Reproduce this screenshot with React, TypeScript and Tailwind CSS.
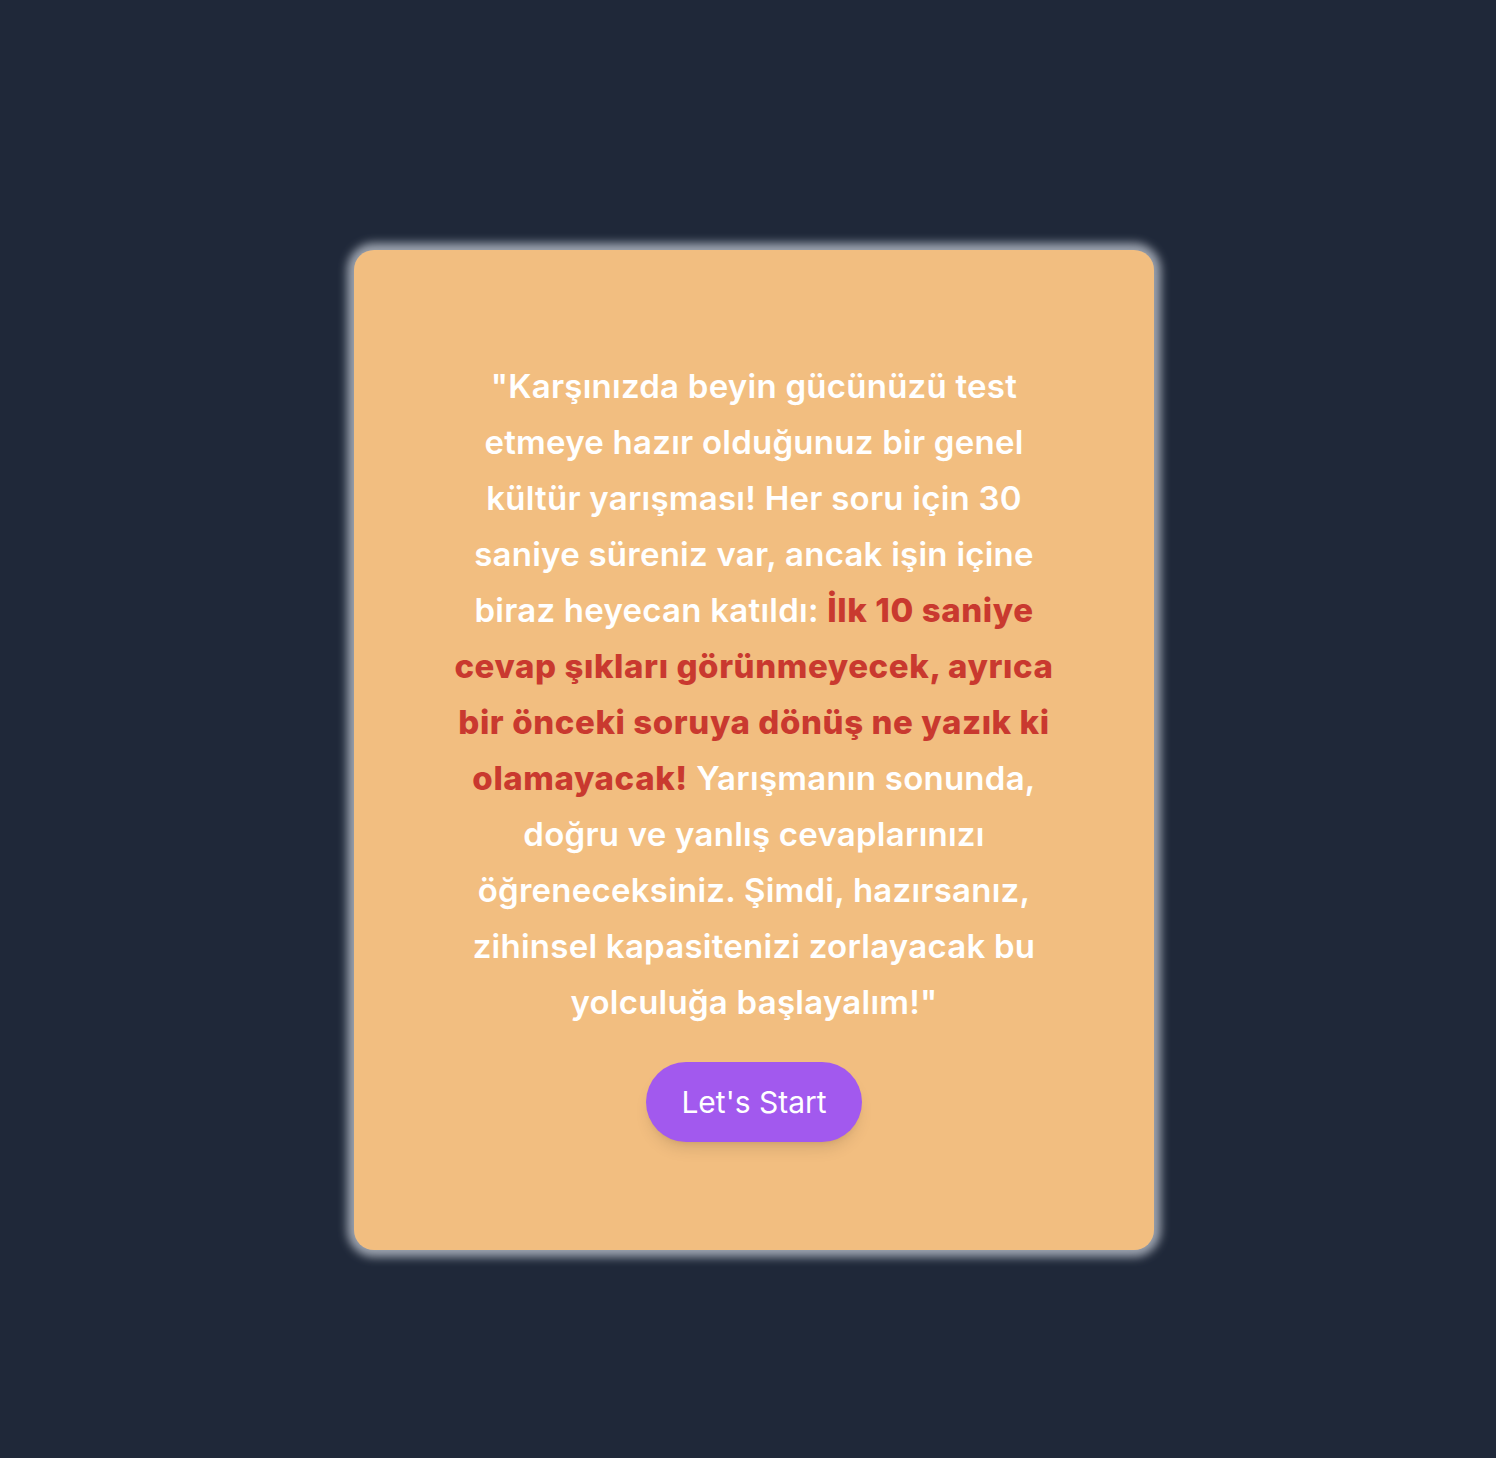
import React from "react";

export default function App() {
  return (
    <div className="min-h-screen w-full bg-[#1f2839] flex items-center justify-center pt-[42px] pl-[12px] font-['Inter',sans-serif]">
      <div className="w-[800px] h-[1000px] rounded-[20px] bg-[#f2be80] shadow-[0_0_10px_7px_#9ca3af] flex flex-col items-center justify-center px-[90px]">
        <p className="text-white text-[33px] font-semibold leading-[56px] tracking-[0.25px] text-center">
          "Karşınızda beyin gücünüzü test etmeye hazır olduğunuz bir genel kültür
          yarışması! Her soru için 30 saniye süreniz var, ancak işin içine biraz
          heyecan katıldı:{" "}
          <span className="text-[#c9392f] font-extrabold tracking-[0.6px]">
            İlk 10 saniye cevap şıkları görünmeyecek, ayrıca bir önceki soruya
            dönüş ne yazık ki olamayacak!
          </span>{" "}
          Yarışmanın sonunda, doğru ve yanlış cevaplarınızı öğreneceksiniz.
          Şimdi, hazırsanız, zihinsel kapasitenizi zorlayacak bu yolculuğa
          başlayalım!"
        </p>
        <button className="mt-8 h-20 px-[35px] rounded-full bg-[#a259ee] text-white text-[30px] shadow-lg">
          Let's Start
        </button>
      </div>
    </div>
  );
}
